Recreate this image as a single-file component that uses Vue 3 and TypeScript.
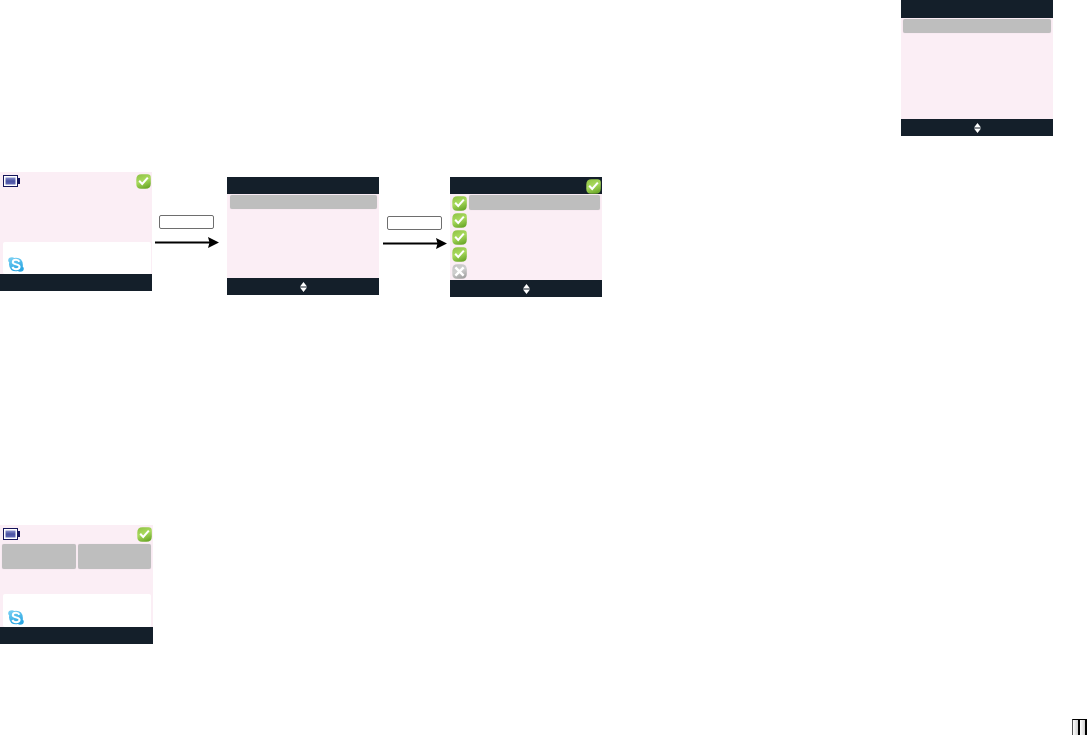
<script setup lang="ts">
type Panel = { left: number; top: number; width: number; height: number };

// rows of the status list in the third screen
const statusRows = ["check", "check", "check", "check", "cross"];

const flowSteps: Panel[] = [
  { left: 155, top: 215, width: 64, height: 33 },
  { left: 383, top: 216, width: 64, height: 33 },
];

const placeOf = (p: Panel) => ({
  left: `${p.left}px`,
  top: `${p.top}px`,
  width: `${p.width}px`,
  height: `${p.height}px`,
});
</script>

<template>
  <div class="page">
    <svg class="defs" width="0" height="0" aria-hidden="true">
      <defs>
        <linearGradient id="green" x1="0.1" y1="0" x2="0.5" y2="1">
          <stop offset="0" stop-color="#8fc244" />
          <stop offset="0.5" stop-color="#a9da5e" />
          <stop offset="1" stop-color="#6fab2c" />
        </linearGradient>
        <linearGradient id="grey" x1="0.1" y1="0" x2="0.5" y2="1">
          <stop offset="0" stop-color="#c4c4c4" />
          <stop offset="0.5" stop-color="#cfcfcf" />
          <stop offset="1" stop-color="#a4a4a4" />
        </linearGradient>
        <linearGradient id="blue" x1="0" y1="0" x2="0.4" y2="1">
          <stop offset="0" stop-color="#7fd3f5" />
          <stop offset="1" stop-color="#2aa6e2" />
        </linearGradient>
        <linearGradient id="cell" x1="0" y1="0" x2="0" y2="1">
          <stop offset="0" stop-color="#8a90cc" />
          <stop offset="0.5" stop-color="#4a52a2" />
          <stop offset="1" stop-color="#5f66b4" />
        </linearGradient>
        <symbol id="check" viewBox="0 0 15 15">
          <path d="M5.5 0.3H11.5Q14.8 0.3 14.8 3.5V9.5Q14.8 14.8 9.5 14.8H5Q0.3 14.8 0.3 10V5.5Q0.3 0.3 5.5 0.3Z" fill="url(#green)" />
          <path d="M3.2 6.8L6.2 10L11.8 3.6" fill="none" stroke="#fff" stroke-width="2" />
        </symbol>
        <symbol id="cross" viewBox="0 0 15 15">
          <path d="M5.5 0.3H9.5Q14.8 0.3 14.8 5.5V10Q14.8 14.8 10 14.8H5Q0.3 14.8 0.3 10V5.5Q0.3 0.3 5.5 0.3Z" fill="url(#grey)" />
          <path d="M3.4 3.4L11.6 11.6M11.6 3.4L3.4 11.6" fill="none" stroke="#fff" stroke-width="2.4" />
        </symbol>
        <symbol id="battery" viewBox="0 0 17 12">
          <rect x="0.5" y="0.5" width="14" height="11" fill="#fff" stroke="#14145a" />
          <rect x="2.5" y="2.5" width="10" height="7" fill="url(#cell)" />
          <rect x="15" y="3" width="2" height="6" fill="#14145a" />
        </symbol>
        <symbol id="skype" viewBox="0 0 16 15">
          <path d="M4 0.2Q5.2 0.2 6.3 1Q7.2 0.8 8 0.8Q14.6 0.8 14.9 8Q14.9 8.8 14.7 9.6Q15.8 10.6 15.8 11.5Q15.8 14.8 12 14.8Q10.8 14.8 9.8 14Q8.8 14.2 8 14.2Q1.5 14.2 1 7.4Q1 6.4 1.2 5.5Q0.2 4.4 0.2 3.5Q0.2 0.2 4 0.2Z" fill="url(#blue)" />
          <path d="M11.4 4.8Q10.4 2.8 8 2.8Q4.8 2.8 4.8 5.2C4.8 8 11.6 6.8 11.6 9.8Q11.6 12.2 8 12.2Q5.4 12.2 4.4 10" fill="none" stroke="#fff" stroke-width="2" />
        </symbol>
      </defs>
    </svg>

    <!-- idle screen -->
    <section class="screen idle first">
      <div class="idle-top">
        <svg class="battery"><use href="#battery" /></svg>
        <svg class="tick"><use href="#check" /></svg>
      </div>
      <div class="message">
        <svg class="skype"><use href="#skype" /></svg>
      </div>
      <div class="softkeys short"></div>
    </section>

    <div v-for="(step, i) in flowSteps" :key="i" class="step" :style="placeOf(step)">
      <div class="key"></div>
      <svg class="arrow" width="64" height="11" viewBox="0 0 64 11">
        <rect x="0" y="4.5" width="56" height="2" fill="#000" />
        <path d="M53 0L64 5.5L53 11L54.5 5.5Z" fill="#000" />
      </svg>
    </div>

    <!-- menu screen -->
    <section class="screen menu second">
      <div class="softkeys"></div>
      <div class="menu-body">
        <div class="selected"></div>
      </div>
      <div class="softkeys scroll">
        <svg width="7" height="10" viewBox="0 0 7 10"><path d="M3.5 0L7 4.5H0ZM0 5.5H7L3.5 10Z" fill="#fff" /></svg>
      </div>
    </section>

    <!-- menu with status list -->
    <section class="screen menu third">
      <div class="softkeys title">
        <svg class="tick"><use href="#check" /></svg>
      </div>
      <div class="status-body">
        <div class="status-icons">
          <svg v-for="(row, i) in statusRows" :key="i" class="tick"><use :href="`#${row}`" /></svg>
        </div>
        <div class="selected"></div>
      </div>
      <div class="softkeys scroll">
        <svg width="7" height="10" viewBox="0 0 7 10"><path d="M3.5 0L7 4.5H0ZM0 5.5H7L3.5 10Z" fill="#fff" /></svg>
      </div>
    </section>

    <!-- idle screen with two buttons -->
    <section class="screen idle fourth">
      <div class="idle-top">
        <svg class="battery"><use href="#battery" /></svg>
        <svg class="tick"><use href="#check" /></svg>
      </div>
      <div class="tiles">
        <div class="tile"></div>
        <div class="tile"></div>
      </div>
      <div class="message low">
        <svg class="skype"><use href="#skype" /></svg>
      </div>
      <div class="softkeys"></div>
    </section>

    <!-- menu cut off by the top of the page -->
    <section class="screen menu fifth">
      <div class="softkeys top"></div>
      <div class="menu-body">
        <div class="selected"></div>
      </div>
      <div class="softkeys scroll">
        <svg width="7" height="10" viewBox="0 0 7 10"><path d="M3.5 0L7 4.5H0ZM0 5.5H7L3.5 10Z" fill="#fff" /></svg>
      </div>
    </section>

    <div class="book">
      <span></span>
      <span></span>
    </div>
  </div>
</template>

<style scoped>
.page {
  position: relative;
  width: 1088px;
  height: 735px;
  overflow: hidden;
  background: #fff;
}
.defs {
  position: absolute;
}
.screen {
  position: absolute;
  display: flex;
  flex-direction: column;
  width: 152px;
  background: #fbeef5;
}
.first {
  left: 0;
  top: 172px;
  height: 119px;
}
.second {
  left: 227px;
  top: 177px;
  height: 118px;
}
.third {
  left: 450px;
  top: 177px;
  height: 119px;
}
.fourth {
  left: 0;
  top: 525px;
  width: 153px;
  height: 119px;
}
.fifth {
  left: 901px;
  top: 0;
  height: 136px;
}
.softkeys {
  flex: none;
  display: flex;
  align-items: center;
  justify-content: center;
  height: 17px;
  background: #141f2a;
}
.softkeys.top {
  height: 18px;
}
.title {
  justify-content: flex-end;
  padding-right: 1px;
}
.title .tick {
  margin-top: 2px;
}
.idle-top {
  flex: none;
  display: flex;
  align-items: flex-start;
  justify-content: space-between;
  padding: 2px 1px 0 3px;
  height: 15px;
}
.battery {
  width: 17px;
  height: 12px;
  margin-top: 1px;
}
.tick {
  flex: none;
  width: 15px;
  height: 15px;
}
.message {
  flex: none;
  display: flex;
  align-items: flex-end;
  height: 32px;
  margin: auto 1px 0 3px;
  padding: 0 0 2px 5px;
  background: #fff;
  border-radius: 2px;
  box-sizing: border-box;
}
.message.low {
  height: 33px;
  margin-right: 2px;
}
.skype {
  width: 16px;
  height: 15px;
}
.menu-body {
  flex: 1;
  padding: 1px 2px;
}
.second .selected {
  margin-left: 1px;
}
.selected {
  height: 14px;
  background: #bebebe;
  border-radius: 2px;
  box-shadow: 0 0 1px #d9c8d2;
}
.status-body {
  flex: 1;
  display: flex;
  gap: 2px;
  padding: 1px 2px;
}
.status-icons {
  display: flex;
  flex-direction: column;
  gap: 2px;
  padding-top: 1px;
}
.status-body .selected {
  flex: 1;
  height: 15px;
}
.tiles {
  flex: none;
  display: flex;
  gap: 2px;
  height: 25px;
  margin-top: 2px;
  padding: 0 2px;
}
.tile {
  flex: 1;
  background: #bebebe;
  border-radius: 2px;
  box-shadow: 0 0 1px #d9c8d2;
}
.step {
  position: absolute;
  display: flex;
  flex-direction: column;
  align-items: flex-start;
  gap: 8px;
}
.key {
  width: 55px;
  height: 14px;
  margin-left: 4px;
  flex: none;
  box-sizing: border-box;
  background: #fff;
  border: 1px solid #6e6e6e;
  border-radius: 2px;
}
.arrow {
  flex: none;
}
.book {
  position: absolute;
  left: 1072px;
  top: 719px;
  display: flex;
  width: 15px;
  height: 16px;
  box-sizing: border-box;
  border-top: 1px solid #000;
  border-left: 1px solid #555;
}
.book span {
  flex: 1;
  background: linear-gradient(90deg, #fff, #d0d0d0);
  border-right: 2px solid #000;
}
</style>
